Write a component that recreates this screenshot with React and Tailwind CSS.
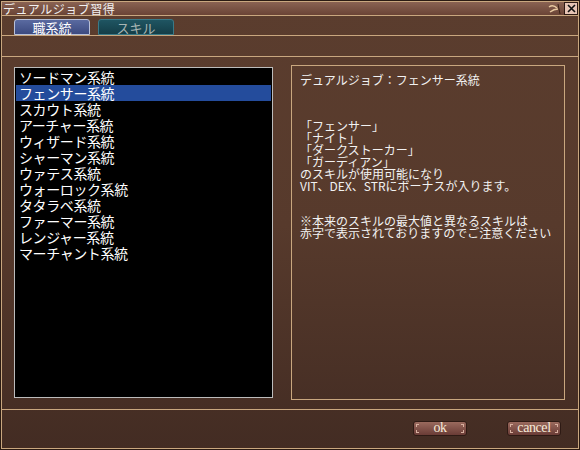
import React from "react";

const jp = { fontFamily: '"Noto Sans CJK JP", "Noto Sans", sans-serif' };

const items = [
  "ソードマン系統",
  "フェンサー系統",
  "スカウト系統",
  "アーチャー系統",
  "ウィザード系統",
  "シャーマン系統",
  "ウァテス系統",
  "ウォーロック系統",
  "タタラベ系統",
  "ファーマー系統",
  "レンジャー系統",
  "マーチャント系統",
];

function Btn({ label, w }) {
  return (
    <div
      className="relative flex h-[15px] items-center justify-center rounded-[3px] border border-[#2e1a14] bg-gradient-to-b from-[#9a6a5e] to-[#6a3c36] text-[14px] leading-none tracking-[-0.4px] text-[#f6ead8]"
      style={{ width: w, fontFamily: '"Liberation Serif", "DejaVu Serif", serif' }}
    >
      <span className="absolute left-[2px] top-[2px] h-[3px] w-[3px] border-l border-t border-[#d8b0a0]" />
      <span className="absolute right-[2px] top-[2px] h-[3px] w-[3px] border-r border-t border-[#d8b0a0]" />
      <span className="absolute bottom-[2px] left-[2px] h-[3px] w-[3px] border-b border-l border-[#d8b0a0]" />
      <span className="absolute bottom-[2px] right-[2px] h-[3px] w-[3px] border-b border-r border-[#d8b0a0]" />
      <span className="relative -mt-[1px]">{label}</span>
    </div>
  );
}

export default function App() {
  return (
    <div className="h-[450px] w-[580px] bg-[#2a1a12] p-[1px]" style={jp}>
      <div className="flex h-[448px] w-[578px] flex-col border border-[#c9a77f] bg-gradient-to-b from-[#5b3d2e] via-[#573a2c] to-[#432c23]">
        {/* title bar */}
        <div className="flex h-[14px] items-center justify-between border-b border-[#c9a77f] bg-gradient-to-b from-[#8a6252] to-[#6a4436] pl-[1px] pr-[0px]">
          <span className="text-[12px] leading-none tracking-[0.5px] text-[#f2f2f2]">デュアルジョブ習得</span>
          <div className="flex items-center gap-[2px]">
            <svg width="14" height="12" viewBox="0 0 14 12">
              <path d="M1 4 Q5 1 9 5" stroke="#e8c8a0" strokeWidth="1.5" fill="none" />
              <path d="M2 9 Q6 6 10 6" stroke="#e8c8a0" strokeWidth="1.5" fill="none" />
              <path d="M10 1 L12 11" stroke="#3a2016" strokeWidth="1" />
            </svg>
            <div className="flex h-[13px] w-[14px] items-center justify-center border border-[#2e1a14] bg-[#e6c4b4]">
              <svg width="9" height="9" viewBox="0 0 9 9">
                <path d="M1 1 L8 8 M8 1 L1 8" stroke="#111" strokeWidth="1.6" />
              </svg>
            </div>
          </div>
        </div>
        {/* tabs */}
        <div className="flex h-[20px] items-end gap-[8px] border-b border-[#c9a77f] pl-[12px]">
          <div className="flex h-[16px] w-[76px] items-center justify-center rounded-t-[3px] border border-[#b8c0d8] bg-gradient-to-b from-[#5a6aa0] to-[#3c4a80] text-[13px] leading-none text-white">
            職系統
          </div>
          <div className="flex h-[16px] w-[76px] items-center justify-center rounded-t-[3px] border border-[#3a7a88] bg-gradient-to-b from-[#1f5562] to-[#143e48] text-[13px] leading-none text-[#a9b6b4]">
            スキル
          </div>
        </div>
        <div className="h-[21px] border-b border-[#c9a77f]" />
        {/* content */}
        <div className="flex h-[352px] items-start pl-[12px] pt-[10px]">
          <div className="h-[331px] w-[259px] border border-[#bcbcbc] bg-black pt-[1px]">
            {items.map((t, i) => (
              <div
                key={t}
                className={
                  "mx-[1px] h-[16px] pl-[3px] text-[14px] leading-[16px] tracking-[-0.4px] text-white " +
                  (i === 1 ? "bg-[#244c9c]" : "")
                }
              >
                {t}
              </div>
            ))}
          </div>
          <div className="ml-[18px] mt-[-2px] h-[335px] w-[274px] border border-[#c9a77f] px-[8px] pt-[8px] text-[12px] leading-[12px] text-[#f2f2f2]">
            <div>デュアルジョブ：フェンサー系統</div>
            <div className="mt-[34px]">「フェンサー」</div>
            <div>「ナイト」</div>
            <div>「ダークストーカー」</div>
            <div>「ガーディアン」</div>
            <div>のスキルが使用可能になり</div>
            <div>VIT、DEX、STRにボーナスが入ります。</div>
            <div className="mt-[23px]">※本来のスキルの最大値と異なるスキルは</div>
            <div>赤字で表示されておりますのでご注意ください</div>
          </div>
        </div>
        <div className="border-b border-[#c9a77f]" />
        <div className="flex flex-1 items-start justify-end gap-[40px] pr-[17px] pt-[11px]">
          <Btn label="ok" w={54} />
          <Btn label="cancel" w={54} />
        </div>
      </div>
    </div>
  );
}
